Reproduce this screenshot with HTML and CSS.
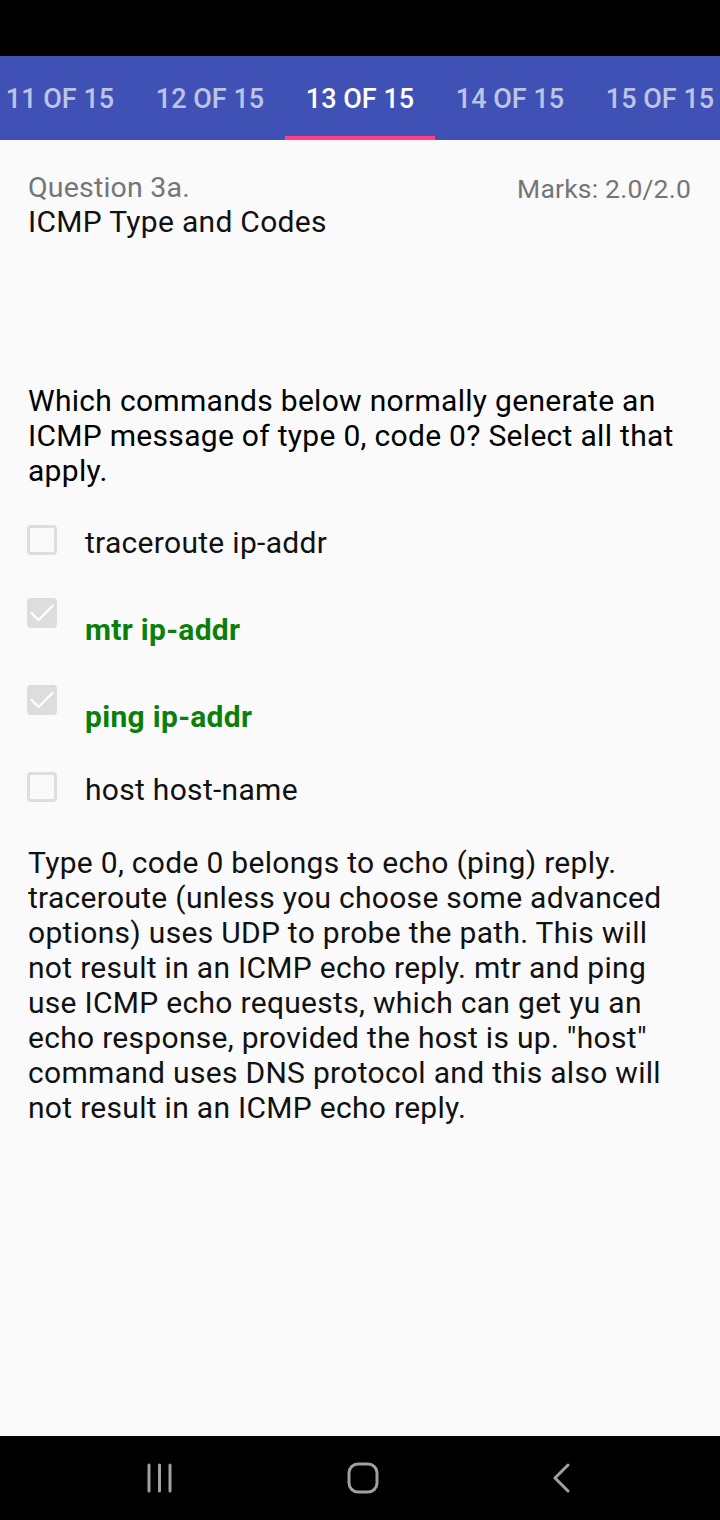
FILE: index.html
```html
<!DOCTYPE html>
<html>
<head>
<meta charset="utf-8">
<link rel="stylesheet" href="styles.css">
</head>
<body>
<div class="status"></div>
<div class="tabs">
  <div class="tab">11 OF 15</div>
  <div class="tab">12 OF 15</div>
  <div class="tab active">13 OF 15</div>
  <div class="tab">14 OF 15</div>
  <div class="tab">15 OF 15</div>
</div>
<main class="content">
  <div class="header">
    <div class="qtitle">
      <div class="qnum">Question 3a.</div>
      <div class="qname">ICMP Type and Codes</div>
    </div>
    <div class="marks">Marks: 2.0/2.0</div>
  </div>
  <p class="question">Which commands below normally generate an ICMP message of type 0, code 0? Select all that apply.</p>
  <div class="options">
    <div class="option">
      <span class="box"></span>
      <span class="label">traceroute ip-addr</span>
    </div>
    <div class="option checked">
      <span class="box"><svg viewBox="0 0 30 30" width="30" height="30"><path d="M4.5 15l7 7L25.5 8" fill="none" stroke="#fff" stroke-width="2.4" stroke-linecap="round" stroke-linejoin="round"/></svg></span>
      <span class="label">mtr ip-addr</span>
    </div>
    <div class="option checked">
      <span class="box"><svg viewBox="0 0 30 30" width="30" height="30"><path d="M4.5 15l7 7L25.5 8" fill="none" stroke="#fff" stroke-width="2.4" stroke-linecap="round" stroke-linejoin="round"/></svg></span>
      <span class="label">ping ip-addr</span>
    </div>
    <div class="option">
      <span class="box"></span>
      <span class="label">host host-name</span>
    </div>
  </div>
  <p class="explain">Type 0, code 0 belongs to echo (ping) reply. traceroute (unless you choose some advanced options) uses UDP to probe the path. This will not result in an ICMP echo reply. mtr and ping use ICMP echo requests, which can get yu an echo response, provided the host is up. "host" command uses DNS protocol and this also will not result in an ICMP echo reply.</p>
</main>
<nav class="navbar">
  <svg class="nav-icon" width="28" height="30" viewBox="0 0 28 30"><path d="M3 2v26M13.5 2v26M24 2v26" stroke="#a0a0a0" stroke-width="3" stroke-linecap="round"/></svg>
  <svg class="nav-icon" width="34" height="34" viewBox="0 0 34 34"><rect x="3" y="3" width="28" height="28" rx="9" fill="none" stroke="#a0a0a0" stroke-width="3"/></svg>
  <svg class="nav-icon" width="20" height="30" viewBox="0 0 20 30"><path d="M16 2L3 15l13 13" fill="none" stroke="#a0a0a0" stroke-width="3" stroke-linecap="round" stroke-linejoin="round"/></svg>
</nav>
</body>
</html>
```
FILE: styles.css
```css
* { box-sizing: border-box; }
html, body { margin: 0; padding: 0; }
body {
  width: 720px;
  height: 1520px;
  display: flex;
  flex-direction: column;
  font-family: Roboto, "Noto Sans", sans-serif;
  background: #fafafa;
  overflow: hidden;
}
.status { height: 56px; background: #000; flex: none; }
.tabs {
  height: 84px;
  flex: none;
  background: #3f51b5;
  display: flex;
  overflow: hidden;
}
.tab {
  flex: none;
  width: 150px;
  height: 84px;
  display: flex;
  align-items: center;
  justify-content: center;
  font-size: 27px;
  font-weight: 500;
  color: rgba(255,255,255,0.68);
  padding-top: 6px;
  border-bottom: 4px solid transparent;
  white-space: nowrap;
}
.tab:first-child { margin-left: -15px; }
.tab.active { color: #fff; border-bottom-color: #ff4081; }
.content {
  flex: 1;
  padding: 30px 28px 0 28px;
  font-size: 30px;
  letter-spacing: 0.3px;
  line-height: 35px;
  color: #000;
}
.header { display: flex; justify-content: space-between; align-items: flex-start; }
.qnum { color: #757575; font-size: 28.5px; letter-spacing: 0.2px; }
.qname { color: #111; margin-top: -1px; }
.marks { color: #757575; font-size: 26.5px; letter-spacing: 0.2px; padding-right: 1px; padding-top: 1px; }
.question { margin: 144px 0 0 0; }
.options { margin-top: 37px; display: flex; flex-direction: column; gap: 38px; }
.option { display: flex; align-items: flex-start; }
.box {
  flex: none;
  width: 30px;
  height: 30px;
  border: 3px solid #dedede;
  border-radius: 4px;
  margin-left: -1px;
  margin-right: 28px;
  position: relative;
}
.box svg { position: absolute; left: -3px; top: -3px; }
.option.checked .box { background: #dddddd; border-color: #dddddd; }
.option.checked .label { padding-top: 14px; color: #0a800a; font-weight: 700; }
.label { color: #111; }
.explain { margin: 38px 0 0 0; color: #111; }
.navbar {
  height: 84px;
  flex: none;
  background: #000;
  display: flex;
  align-items: center;
  justify-content: space-between;
  padding: 0 148px 0 146px;
}
```
